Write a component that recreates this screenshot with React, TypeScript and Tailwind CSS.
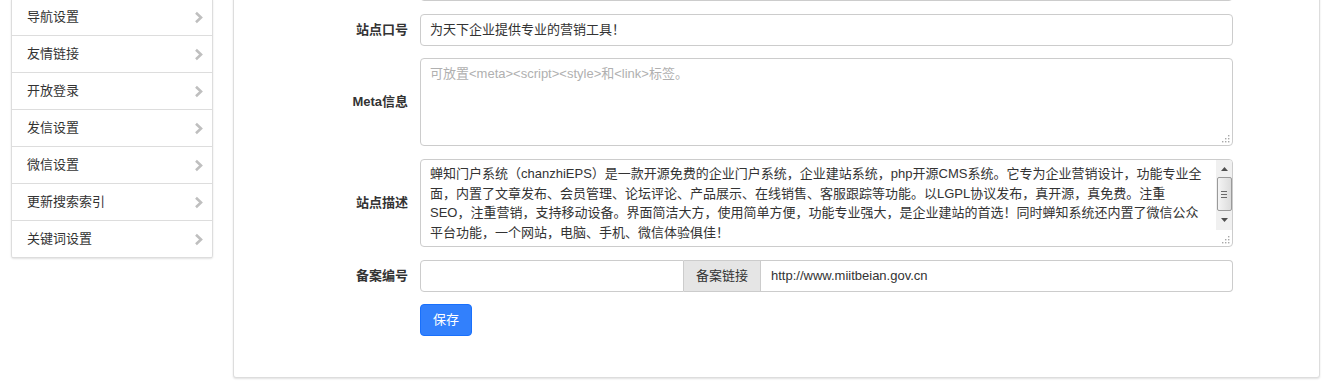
import React from "react";

const FONT = { fontFamily: '"Liberation Sans", "Noto Sans CJK SC", sans-serif' };

const menu = ["导航设置", "友情链接", "开放登录", "发信设置", "微信设置", "更新搜索索引", "关键词设置"];

function Chevron() {
  return (
    <svg width="9" height="13" viewBox="0 0 9 13" className="mr-[9px]">
      <polyline points="2,1.8 7,6.5 2,11.2" fill="none" stroke="#bfbfbf" strokeWidth="2.6" strokeLinejoin="miter" />
    </svg>
  );
}

function Grip() {
  const dots: [number, number][] = [
    [6, 0],
    [3, 3],
    [6, 3],
    [0, 6],
    [3, 6],
    [6, 6],
  ];
  return (
    <svg width="9" height="9" viewBox="0 0 9 9" className="absolute right-[2px] bottom-[2px]">
      {dots.map(([x, y], i) => (
        <rect key={i} x={x + 1} y={y + 1} width="1.4" height="1.4" fill="#a8a8a8" />
      ))}
    </svg>
  );
}

function Row({ label, children, className }: { label: string; children: React.ReactNode; className?: string }) {
  return (
    <div className={"flex items-center " + (className || "")}>
      <div className="w-[174px] text-right font-bold text-[13px] text-[#333] shrink-0">{label}</div>
      <div className="ml-[12px] flex-1">{children}</div>
    </div>
  );
}

export default function App() {
  const lines = [
    "蝉知门户系统（chanzhiEPS）是一款开源免费的企业门户系统，企业建站系统，php开源CMS系统。它专为企业营销设计，功能专业全",
    "面，内置了文章发布、会员管理、论坛评论、产品展示、在线销售、客服跟踪等功能。以LGPL协议发布，真开源，真免费。注重",
    "SEO，注重营销，支持移动设备。界面简洁大方，使用简单方便，功能专业强大，是企业建站的首选！同时蝉知系统还内置了微信公众",
    "平台功能，一个网站，电脑、手机、微信体验俱佳！",
  ];
  return (
    <div style={FONT} className="w-[1339px] h-[384px] overflow-hidden bg-white flex items-start text-[13px] text-[#333]">
      {/* left menu */}
      <div className="ml-[11px] mt-[-1px] w-[202px] border-x border-[#ddd] rounded-b-[3px] bg-white shadow-[0_1px_2px_rgba(0,0,0,0.12)]">
        {menu.map((m) => (
          <div key={m} className="h-[37px] border-b border-[#ddd] flex items-center justify-between pl-[15px]">
            <span className="leading-[20px]">{m}</span>
            <Chevron />
          </div>
        ))}
      </div>

      {/* main panel */}
      <div className="ml-[20px] mt-[-32px] w-[1087px] border border-[#ddd] rounded-[3px] bg-white shadow-[0_1px_2px_rgba(0,0,0,0.12)] pr-[86px] pb-[41px] flex flex-col">
        <Row label="">
          <div className="h-[32px] border border-[#ccc] rounded-[4px]" />
        </Row>
        <Row label="站点口号" className="mt-[13px]">
          <div className="h-[32px] border border-[#ccc] rounded-[4px] px-[9px] flex items-center leading-[20px]">
            为天下企业提供专业的营销工具！
          </div>
        </Row>
        <Row label="Meta信息" className="mt-[12px]">
          <div className="relative h-[88px] border border-[#ccc] rounded-[4px] px-[9px] pt-[5px] leading-[20px] text-[#b0b0b0]">
            可放置&lt;meta&gt;&lt;script&gt;&lt;style&gt;和&lt;link&gt;标签。
            <Grip />
          </div>
        </Row>
        <Row label="站点描述" className="mt-[13px]">
          <div className="relative h-[88px] border border-[#ccc] rounded-[4px] overflow-hidden">
            <div className="pl-[9px] pr-[20px] pt-[4px] leading-[19.5px] text-[#333]">
              {lines.map((l, i) => (
                <div key={i} className="whitespace-nowrap overflow-hidden">
                  {l}
                </div>
              ))}
            </div>
            {/* fake scrollbar */}
            <div className="absolute right-0 top-0 w-[16px] h-[70px] bg-[#f0f0f0] flex flex-col items-center">
              <div className="h-[17px] w-full flex items-center justify-center">
                <svg width="7" height="4" viewBox="0 0 7 4">
                  <polygon points="0,4 7,4 3.5,0" fill="#505050" />
                </svg>
              </div>
              <div className="w-[15px] h-[34px] border border-[#9a9a9a] rounded-[2px] bg-[linear-gradient(to_right,#f4f4f4,#dcdcdc)] flex flex-col items-center justify-center gap-[2px]">
                <div className="w-[6px] h-px bg-[#6a6a6a]" />
                <div className="w-[6px] h-px bg-[#6a6a6a]" />
                <div className="w-[6px] h-px bg-[#6a6a6a]" />
              </div>
              <div className="h-[17px] w-full flex items-center justify-center">
                <svg width="7" height="4" viewBox="0 0 7 4">
                  <polygon points="0,0 7,0 3.5,4" fill="#505050" />
                </svg>
              </div>
            </div>
            <Grip />
          </div>
        </Row>
        <Row label="备案编号" className="mt-[13px]">
          <div className="flex h-[32px]">
            <div className="w-[264px] border border-[#ccc] rounded-l-[4px]" />
            <div className="w-[77px] border-y border-r border-[#ccc] bg-[#e5e5e5] flex items-center justify-center">
              备案链接
            </div>
            <div className="flex-1 border-y border-r border-[#ccc] rounded-r-[4px] flex items-center pl-[10px]">
              http://www.miitbeian.gov.cn
            </div>
          </div>
        </Row>
        <Row label="" className="mt-[12px]">
          <button className="w-[52px] h-[32px] bg-[#3280fc] border border-[#1970fc] rounded-[4px] text-white text-[13px] flex items-center justify-center">
            保存
          </button>
        </Row>
      </div>
    </div>
  );
}
